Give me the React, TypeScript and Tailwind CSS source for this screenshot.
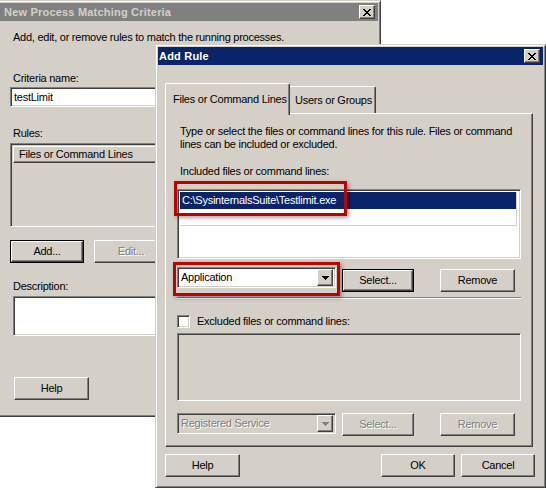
import React from 'react';

const raised =
  'border border-t-white border-l-white border-r-[#404040] border-b-[#404040] shadow-[inset_-1px_-1px_#808080]';
const sunken =
  'border border-t-[#808080] border-l-[#808080] border-r-white border-b-white shadow-[inset_1px_1px_#404040,inset_-1px_-1px_#d4d0c8]';
const frame =
  'border border-t-[#d4d0c8] border-l-[#d4d0c8] border-r-[#404040] border-b-[#404040] shadow-[inset_1px_1px_#fff,inset_-1px_-1px_#808080]';
const disabledText = 'text-[#808080] [text-shadow:1px_1px_0_#fff]';

const CloseButton = () => (
  <div className={`${raised} bg-[#d4d0c8] w-[16px] h-[14px] flex items-center justify-center`}>
    <svg width="8" height="7" viewBox="0 0 8 7" shapeRendering="crispEdges">
      <path
        d="M0 0h2v1h-2zM6 0h2v1h-2zM1 1h2v1h-2zM5 1h2v1h-2zM2 2h4v1h-4zM3 3h2v1h-2zM2 4h4v1h-4zM1 5h2v1h-2zM5 5h2v1h-2zM0 6h2v1h-2zM6 6h2v1h-2z"
        fill="#000"
      />
    </svg>
  </div>
);

const Button = ({
  label,
  w,
  isDefault,
  disabled,
}: {
  label: string;
  w: string;
  isDefault?: boolean;
  disabled?: boolean;
}) => (
  <div className={`${w} h-[23px] ${isDefault ? 'border border-black' : ''} shrink-0`}>
    <div
      className={`${raised} bg-[#d4d0c8] w-full h-full flex items-center justify-center ${
        disabled ? disabledText : 'text-black'
      }`}
    >
      {label}
    </div>
  </div>
);

const Combo = ({ label, disabled }: { label: string; disabled?: boolean }) => (
  <div
    className={`${sunken} w-[159px] h-[21px] ${disabled ? 'bg-[#d4d0c8]' : 'bg-white'} flex items-center p-[2px] shrink-0`}
  >
    <span className={`flex-1 pl-[1px] ${disabled ? disabledText : 'text-black'}`}>{label}</span>
    <div className={`${raised} bg-[#d4d0c8] w-[16px] h-[17px] flex items-center justify-center`}>
      <svg width="7" height="4" viewBox="0 0 7 4" shapeRendering="crispEdges">
        <path d="M0 0h7v1h-7zM1 1h5v1h-5zM2 2h3v1h-3zM3 3h1v1h-1z" fill={disabled ? '#808080' : '#000'} />
      </svg>
    </div>
  </div>
);

export default function App() {
  return (
    <div className="relative w-[546px] h-[490px] bg-white overflow-hidden font-['Liberation_Sans',Arial,sans-serif] text-[11px] leading-[13px] tracking-[-0.25px] text-black">
      {/* New Process Matching Criteria (inactive, behind) */}
      <div className={`absolute left-[-3px] top-0 w-[384px] h-[417px] bg-[#d4d0c8] ${frame} p-[2px] flex flex-col`}>
        <div className="h-[18px] bg-[#808080] flex items-center justify-between pl-[4px] pr-[3px]">
          <span className="font-bold text-[#d4d0c8] tracking-[0.2px]">New Process Matching Criteria</span>
          <CloseButton />
        </div>
        <div className="flex flex-col pl-[10px]">
          <p className="mt-[10px] ml-[3px]">Add, edit, or remove rules to match the running processes.</p>
          <p className="mt-[28px] ml-[3px]">Criteria name:</p>
          <div className={`${sunken} mt-[2px] w-[355px] h-[20px] bg-white flex items-center pl-[3px]`}>testLimit</div>
          <p className="mt-[20px] ml-[3px]">Rules:</p>
          <div className={`${sunken} mt-[3px] w-[355px] h-[84px] bg-[#d4d0c8] p-[2px]`}>
            <div className={`${raised} h-[17px] w-[250px] flex items-center pl-[5px]`}>Files or Command Lines</div>
          </div>
          <div className="mt-[13px] flex gap-[10px]">
            <Button label="Add..." w="w-[74px]" isDefault />
            <Button label="Edit..." w="w-[74px]" disabled />
          </div>
          <p className="mt-[17px] ml-[3px]">Description:</p>
          <div className={`${sunken} mt-[3px] ml-[3px] w-[352px] h-[40px] bg-white`} />
          <div className="mt-[41px] ml-[4px]">
            <Button label="Help" w="w-[75px]" />
          </div>
        </div>
      </div>

      {/* Add Rule (active) */}
      <div className={`absolute left-[155px] top-[44px] w-[391px] h-[444px] bg-[#d4d0c8] ${frame} p-[2px] flex flex-col`}>
        <div className="h-[18px] bg-[#0a246a] flex items-center justify-between pl-[1px] pr-[3px]">
          <span className="font-bold text-white tracking-[0.2px]">Add Rule</span>
          <CloseButton />
        </div>
        <div className="flex flex-col pl-[7px] pr-[8px]">
          {/* tabs */}
          <div className="mt-[18px] h-[30px] flex items-end whitespace-nowrap">
            <div className="relative z-10 -mb-[2px] w-[125px] h-[32px] bg-[#d4d0c8] border border-b-0 border-t-white border-l-white border-r-[#404040] rounded-t-[2px] shadow-[inset_-1px_0_#808080] pt-[9px] pl-[7px]">
              Files or Command Lines
            </div>
            <div className="w-[86px] h-[27px] bg-[#d4d0c8] border border-b-0 border-t-white border-l-0 border-r-[#404040] rounded-tr-[2px] shadow-[inset_-1px_0_#808080] pt-[7px] pl-[5px]">
              Users or Groups
            </div>
          </div>

          {/* tab panel */}
          <div className={`relative w-[368px] h-[334px] ${raised} pt-[11px] pl-[11px] flex flex-col`}>
            <p className="ml-[3px] whitespace-nowrap">
              Type or select the files or command lines for this rule. Files or command
              <br />
              lines can be included or excluded.
            </p>
            <p className="ml-[3px] mt-[14px]">Included files or command lines:</p>
            <div className={`${sunken} mt-[11px] w-[344px] h-[70px] bg-white p-[2px]`}>
              <div className="h-[34px] border-r border-b border-[#d4d0c8] mr-[1px]">
                <div className="h-[17px] bg-[#0a246a] text-white flex items-center pl-[2px]">
                  C:\SysinternalsSuite\Testlimit.exe
                </div>
              </div>
            </div>
            <div className="mt-[8px] flex items-start">
              <Combo label="Application" />
              <div className="mt-[2px] ml-[6px]">
                <Button label="Select..." w="w-[72px]" isDefault />
              </div>
              <div className="mt-[2px] ml-[26px]">
                <Button label="Remove" w="w-[75px]" />
              </div>
            </div>
            <div className="mt-[5px] w-[344px] h-[2px] border-t border-t-[#808080] border-b border-b-white" />
            <div className="mt-[16px] flex items-center">
              <div className={`${sunken} w-[13px] h-[13px] bg-white`} />
              <span className="ml-[7px]">Excluded files or command lines:</span>
            </div>
            <div className={`${sunken} mt-[5px] w-[344px] h-[68px] bg-[#d4d0c8]`} />
            <div className="mt-[12px] flex items-start">
              <Combo label="Registered Service" disabled />
              <div className="ml-[6px]">
                <Button label="Select..." w="w-[72px]" disabled />
              </div>
              <div className="ml-[26px]">
                <Button label="Remove" w="w-[75px]" disabled />
              </div>
            </div>

            {/* red callouts */}
            <div className="absolute left-[8px] top-[67px] w-[173px] h-[35px] border-[3px] border-[#c00000] shadow-[2px_2px_4px_rgba(0,0,0,0.35)]" />
            <div className="absolute left-[7px] top-[148px] w-[167px] h-[34px] border-[3px] border-[#c00000] shadow-[2px_2px_4px_rgba(0,0,0,0.35)]" />
          </div>

          <div className="mt-[7px] flex">
            <Button label="Help" w="w-[75px]" />
            <div className="ml-auto flex gap-[6px]">
              <Button label="OK" w="w-[74px]" />
              <Button label="Cancel" w="w-[74px]" />
            </div>
          </div>
        </div>
      </div>
    </div>
  );
}
